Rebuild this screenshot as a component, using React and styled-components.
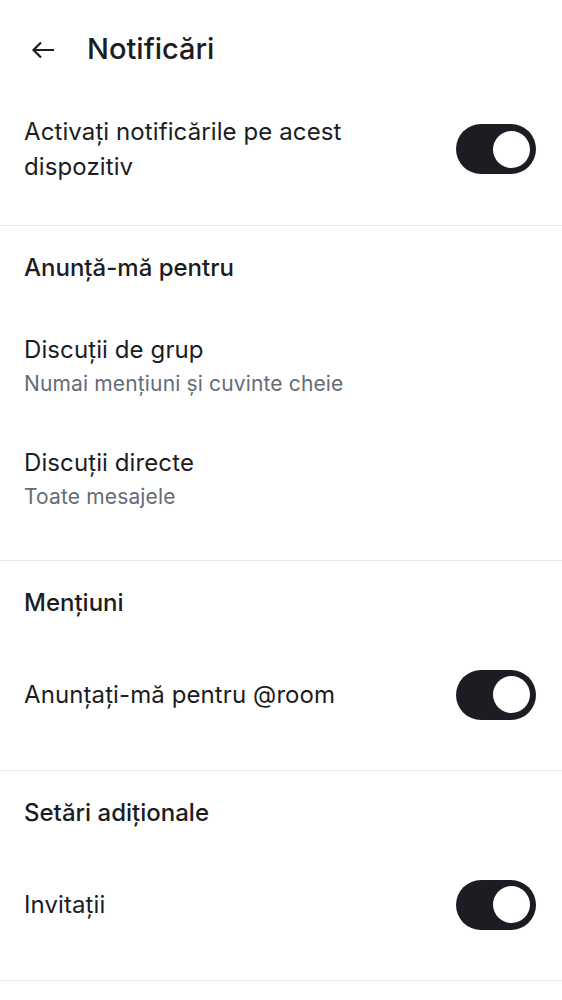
import React from 'react'
import styled, { createGlobalStyle } from 'styled-components'

const GlobalStyle = createGlobalStyle`
    body {
        margin: 0;
        background: #ffffff;
        font-family: Inter, Roboto, "Noto Sans", sans-serif;
        color: #1b1d22;
    }
`

const Page = styled.div`
    width: 562px;
    min-height: 1000px;
    background: #ffffff;
`
const Header = styled.div`
    height: 98px;
    display: flex;
    align-items: center;
    padding-left: 31px;
    gap: 32px;
`
const BackButton = styled.button`
    border: none;
    background: none;
    padding: 0;
    margin-top: 2px;
    width: 24px;
    height: 24px;
    display: flex;
    align-items: center;
    justify-content: center;
    svg { display: block; }
`
const HeaderTitle = styled.h1`
    margin: 0;
    font-size: 29px;
    line-height: 34px;
    font-weight: 500;
    color: #1b1d22;
`
const Section = styled.section`
    border-bottom: 1px solid #e3e7ec;
`
const SectionTitle = styled.h2`
    margin: 0;
    padding: 26px 24px 0;
    font-size: 24px;
    line-height: 32px;
    font-weight: 500;
    color: #1b1d22;
`
const List = styled.div`
    padding: 26px 0 24px;
`
const ListItem = styled.div`
    display: flex;
    flex-direction: column;
    padding: 22px 24px 23px;
`
const ToggleRow = styled.div`
    display: flex;
    align-items: center;
    justify-content: space-between;
    gap: 24px;
    padding: ${p => p.$pad || '0 26px 0 24px'};
    min-height: ${p => p.$height || 0}px;
    box-sizing: border-box;
`
const RowTitle = styled.div`
    font-size: 24px;
    line-height: 35px;
    letter-spacing: 0.1px;
    color: #1b1d22;
    max-width: ${p => p.$wrap ? '350px' : 'none'};
`
const RowSubtitle = styled.div`
    font-size: 21px;
    line-height: 33px;
    letter-spacing: 0.15px;
    color: #656c76;
`
const Switch = styled.div`
    width: 80px;
    height: 50px;
    border-radius: 25px;
    background: #1b1d22;
    display: flex;
    align-items: center;
    justify-content: flex-end;
    padding-right: 6px;
    box-sizing: border-box;
    flex-shrink: 0;
    &::after {
        content: '';
        width: 37px;
        height: 37px;
        border-radius: 50%;
        background: #ffffff;
    }
`

function ArrowBack() {
    return (
        <svg width="24" height="18" viewBox="0 0 24 18" fill="none">
            <path d="M23 9H2.5M10 1.5L2.5 9l7.5 7.5" stroke="#1b1d22" strokeWidth="2.2" />
        </svg>
    )
}

function App() {
    return (
        <>
        <GlobalStyle />
        <Page>
            <Header>
                <BackButton><ArrowBack /></BackButton>
                <HeaderTitle>Notificări</HeaderTitle>
            </Header>

            <Section>
                <ToggleRow $pad="16px 26px 41px 24px">
                    <RowTitle $wrap>Activați notificările pe acest dispozitiv</RowTitle>
                    <Switch />
                </ToggleRow>
            </Section>

            <Section>
                <SectionTitle>Anunță-mă pentru</SectionTitle>
                <List>
                    <ListItem>
                        <RowTitle>Discuții de grup</RowTitle>
                        <RowSubtitle>Numai mențiuni și cuvinte cheie</RowSubtitle>
                    </ListItem>
                    <ListItem>
                        <RowTitle>Discuții directe</RowTitle>
                        <RowSubtitle>Toate mesajele</RowSubtitle>
                    </ListItem>
                </List>
            </Section>

            <Section>
                <SectionTitle>Mențiuni</SectionTitle>
                <ToggleRow $height={151}>
                    <RowTitle>Anunțați-mă pentru @room</RowTitle>
                    <Switch />
                </ToggleRow>
            </Section>

            <Section>
                <SectionTitle>Setări adiționale</SectionTitle>
                <ToggleRow $height={151}>
                    <RowTitle>Invitații</RowTitle>
                    <Switch />
                </ToggleRow>
            </Section>
        </Page>
        </>
    )
}

export default App
